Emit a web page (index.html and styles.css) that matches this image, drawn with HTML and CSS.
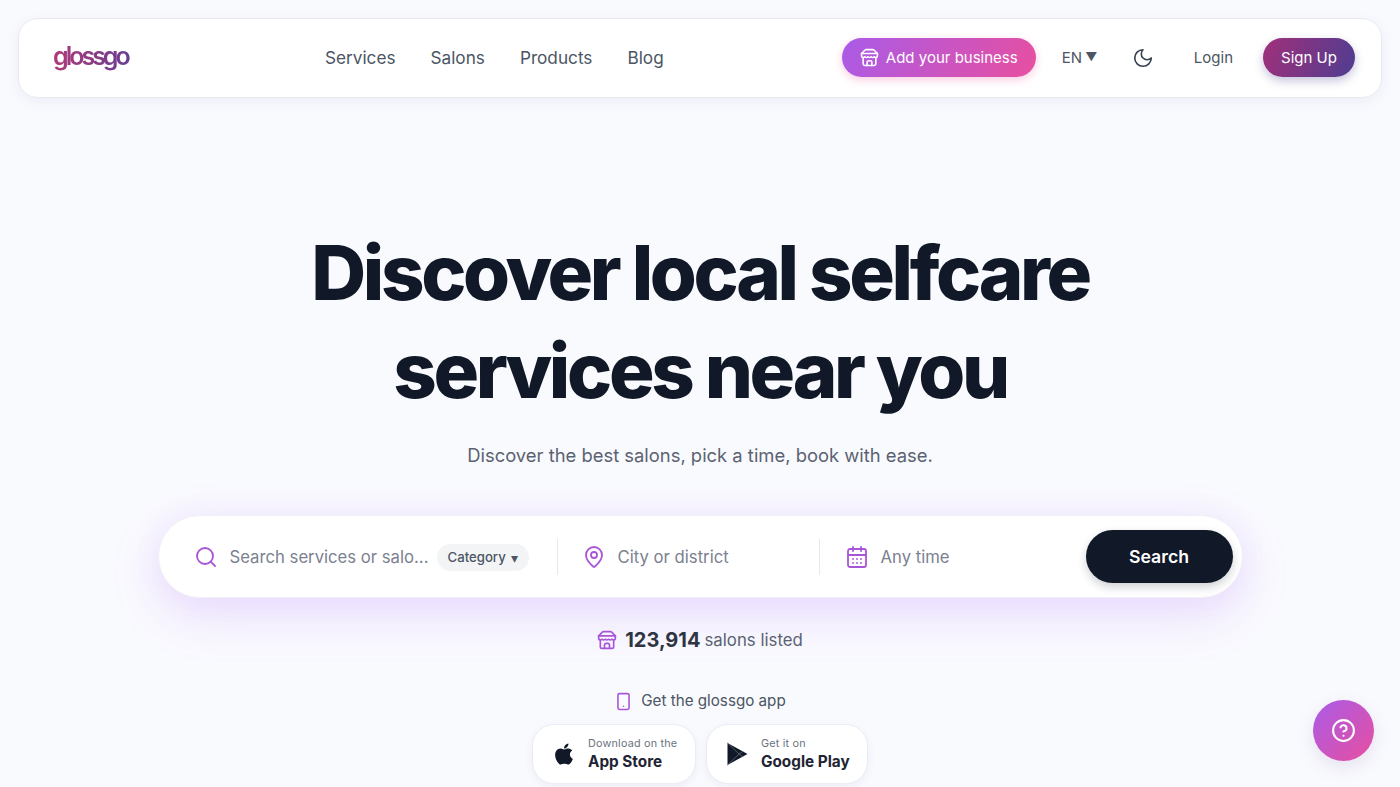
FILE: index.html
```html
<!DOCTYPE html>
<html lang="en">
<head>
<meta charset="utf-8">
<title>glossgo</title>
<link rel="stylesheet" href="styles.css">
</head>
<body>
<header class="nav">
  <a class="logo">glossgo</a>
  <nav class="links"><a>Services</a><a>Salons</a><a>Products</a><a>Blog</a></nav>
  <div class="actions">
    <button class="biz">
      <svg class="ic19" viewBox="0 0 24 24"><use href="#store"/></svg>Add your business
    </button>
    <span class="lang">EN<span class="caret">▼</span></span>
    <svg class="moon" viewBox="0 0 24 24"><path d="M12 3a6 6 0 0 0 9 9 9 9 0 1 1-9-9Z"/></svg>
    <a class="login">Login</a>
    <button class="signup">Sign Up</button>
  </div>
</header>

<main class="hero">
  <h1>Discover local selfcare<br>services near you</h1>
  <p class="sub">Discover the best salons, pick a time, book with ease.</p>

  <div class="search">
    <div class="field f1">
      <svg class="ic24" viewBox="0 0 24 24"><circle cx="11" cy="11" r="8"/><path d="m21 21-4.3-4.3"/></svg>
      <span class="ph">Search services or salo...</span>
      <span class="chip">Category <i>▾</i></span>
    </div>
    <div class="field f2">
      <svg class="ic24" viewBox="0 0 24 24"><path d="M20 10c0 4.993-5.539 10.193-7.399 11.799a1 1 0 0 1-1.202 0C9.539 20.193 4 14.993 4 10a8 8 0 0 1 16 0"/><circle cx="12" cy="10" r="3"/></svg>
      <span class="ph">City or district</span>
    </div>
    <div class="field f3">
      <svg class="ic24" viewBox="0 0 24 24"><path d="M8 2v4M16 2v4M3 10h18M8 14h.01M12 14h.01M16 14h.01M8 18h.01M12 18h.01M16 18h.01"/><rect x="3" y="4" width="18" height="18" rx="2"/></svg>
      <span class="ph">Any time</span>
    </div>
    <button class="go">Search</button>
  </div>

  <p class="count"><svg class="ic20" viewBox="0 0 24 24"><use href="#store"/></svg><b>123,914</b> salons listed</p>
  <p class="getapp"><svg class="ic19" viewBox="0 0 24 24"><rect x="5" y="2" width="14" height="20" rx="2"/><path d="M12 18h.01"/></svg>Get the glossgo app</p>

  <div class="stores">
    <a class="store s1">
      <svg class="brand apple" viewBox="0 0 24 24"><path d="M17.05 20.28c-.98.95-2.05.8-3.08.35-1.09-.46-2.09-.48-3.24 0-1.44.62-2.2.44-3.06-.35C2.79 15.25 3.51 7.59 9.05 7.31c1.35.07 2.29.74 3.08.8 1.18-.24 2.31-.93 3.57-.84 1.51.12 2.65.72 3.4 1.8-3.12 1.87-2.38 5.98.48 7.13-.57 1.5-1.31 2.99-2.54 4.09zM12.03 7.25c-.15-2.23 1.66-4.07 3.74-4.25.29 2.58-2.34 4.5-3.74 4.25z"/></svg>
      <span class="st"><small>Download on the</small><strong>App Store</strong></span>
    </a>
    <a class="store s2">
      <svg class="brand" viewBox="0 0 24 24"><path d="M2.5 1 22.5 12 2.5 23Z"/><path class="pl" d="M2.5 1 14 12 2.5 23M14 12l4-2.6M14 12l4 2.6"/></svg>
      <span class="st"><small>Get it on</small><strong>Google Play</strong></span>
    </a>
  </div>
</main>

<button class="help"><svg viewBox="0 0 24 24"><circle cx="12" cy="12" r="10"/><path d="M9.09 9a3 3 0 0 1 5.83 1c0 2-3 3-3 3M12 17h.01"/></svg></button>

<svg class="defs" aria-hidden="true"><defs><g id="store"><path d="m2 7 4.41-4.41A2 2 0 0 1 7.83 2h8.34a2 2 0 0 1 1.42.59L22 7"/><path d="M4 12v8a2 2 0 0 0 2 2h12a2 2 0 0 0 2-2v-8"/><path d="M15 22v-4a2 2 0 0 0-2-2h-2a2 2 0 0 0-2 2v4"/><path d="M2 7h20"/><path d="M22 7v3a2 2 0 0 1-2 2a2.7 2.7 0 0 1-1.59-.63.7.7 0 0 0-.82 0A2.7 2.7 0 0 1 16 12a2.7 2.7 0 0 1-1.59-.63.7.7 0 0 0-.82 0A2.7 2.7 0 0 1 12 12a2.7 2.7 0 0 1-1.59-.63.7.7 0 0 0-.82 0A2.7 2.7 0 0 1 8 12a2.7 2.7 0 0 1-1.59-.63.7.7 0 0 0-.82 0A2.7 2.7 0 0 1 4 12a2 2 0 0 1-2-2V7"/></g></defs></svg>
</body>
</html>
```
FILE: styles.css
```css
* { box-sizing: border-box; }
html, body { height: 100%; }
body {
  margin: 0;
  height: 787px;
  overflow: hidden;
  padding: 18px 18px 0;
  background: #f9fafe;
  font-family: Inter, "Liberation Sans", sans-serif;
  color: #111827;
}
svg { fill: none; stroke: currentColor; stroke-width: 2; stroke-linecap: round; stroke-linejoin: round; flex: none; }
button { font-family: inherit; border: 0; cursor: pointer; }
.defs { width: 0; height: 0; position: absolute; }
.ic19 { width: 19px; height: 19px; }
.ic20 { width: 20px; height: 20px; }
.ic24 { width: 24px; height: 24px; color: #a855d8; stroke-width: 1.8; }

.nav {
  height: 80px;
  display: flex;
  align-items: center;
  padding: 0 26px 1px 34px;
  background: #fff;
  border: 1px solid #e9ebf1;
  border-radius: 20px;
  box-shadow: 0 4px 14px rgba(90, 90, 150, .07);
}
.logo {
  width: 90px;
  padding-right: 10px;
  margin-top: -4px;
  font-family: Inter, sans-serif;
  font-size: 25px;
  font-weight: 600;
  letter-spacing: -3px;
  line-height: 34px;
  background: linear-gradient(90deg, #b03a78, #5b3f95);
  -webkit-background-clip: text;
  background-clip: text;
  color: transparent;
}
.links { display: flex; gap: 35px; margin-left: 182px; font-size: 17.2px; color: #4b5563; }
.actions { margin-left: auto; display: flex; align-items: center; color: #4b5563; }
.biz {
  width: 194px; height: 39px;
  display: flex; align-items: center; gap: 7px;
  padding: 0 0 0 18px;
  color: #fff;
  font-size: 15px;
  border-radius: 20px;
  background: linear-gradient(120deg, #a95be8, #e84f9f);
  box-shadow: 0 3px 9px rgba(236, 72, 153, .28);
}
.lang { display: flex; align-items: center; margin-left: 26px; font-size: 15px; width: 36px; white-space: nowrap; }
.caret { font-size: 12px; margin: -3px 0 0 3px; }
.moon { width: 22px; height: 22px; margin-left: 34px; color: #374151; stroke-width: 1.8; }
.login { margin-left: 40px; font-size: 15px; }
.signup {
  margin-left: 30px;
  width: 92px; height: 39px;
  color: #fff;
  font-size: 15px;
  border-radius: 20px;
  background: linear-gradient(110deg, #a0307a, #4f3d91);
  box-shadow: 0 4px 10px rgba(70, 60, 140, .3);
}

.hero { display: flex; flex-direction: column; align-items: center; }
h1 {
  margin: 125px 0 0;
  text-align: center;
  font-size: 76px;
  line-height: 98px;
  font-weight: 800;
  letter-spacing: -3.35px;
  color: #111827;
}
.sub { margin: 22px 0 0; font-size: 18.4px; line-height: 28px; color: #5b6272; }

.search {
  width: 1085px; height: 83px;
  margin-top: 46px;
  display: flex; align-items: center;
  background: #fff;
  border: 1px solid #f0f0f6;
  border-radius: 42px;
  box-shadow: 0 16px 50px rgba(168, 85, 247, .18), 0 0 30px rgba(168, 85, 247, .06);
}
.field { display: flex; align-items: center; height: 36px; margin-top: 1px; font-size: 16.7px; }
.field + .field { border-left: 1px solid #e7e8ec; }
.f1 { width: 398px; padding-left: 35px; }
.f2 { width: 262px; padding-left: 24px; }
.f3 { width: 267px; padding-left: 25px; }
.ph { margin-left: 12px; color: #7b8190; white-space: nowrap; }
.chip {
  margin-left: 9px;
  height: 27px; width: 92px;
  padding-left: 10px;
  display: flex; align-items: center; gap: 5px;
  font-size: 13.2px; font-weight: 500; color: #4b5563;
  background: #f3f4f6;
  border-radius: 14px;
  white-space: nowrap;
}
.chip i { font-style: normal; font-size: 14px; }
.go {
  width: 147px; height: 53px;
  color: #fff;
  font-size: 17.7px; font-weight: 600;
  background: #111827;
  border-radius: 27px;
  box-shadow: 0 4px 10px rgba(17, 24, 39, .2);
}

.count { display: flex; align-items: center; margin: 28px 0 0; font-size: 16.8px; line-height: 28px; color: #5b6272; }
.count .ic20 { color: #a855d8; margin-right: 8px; }
.count b { font-size: 20px; font-weight: 700; color: #2f3443; margin-right: 4px; }
.getapp { display: flex; align-items: center; gap: 8px; margin: 35px 0 0; font-size: 15.2px; line-height: 24px; color: #4b5563; }
.getapp .ic19 { color: #a855d8; }

.stores { display: flex; gap: 10px; margin-top: 11px; }
.store {
  height: 60px;
  display: flex; align-items: center; gap: 12px;
  padding-left: 19px;
  background: #fff;
  border: 1px solid #ebedf2;
  border-radius: 22px;
  box-shadow: 0 3px 8px rgba(90, 90, 150, .07);
}
.s1 { width: 164px; padding-left: 17px; gap: 10px; }
.s2 { width: 162px; padding-left: 18px; }
.brand { width: 24px; height: 24px; fill: #111827; stroke: none; }
.apple { width: 28px; height: 28px; }
.brand .pl { fill: none; stroke: #6b7280; stroke-width: .7; }
.st { display: flex; flex-direction: column; }
.st small { font-size: 10.8px; line-height: 13px; margin-bottom: 2px; letter-spacing: .2px; color: #6b7280; }
.st strong { font-size: 15.3px; line-height: 20px; font-weight: 700; color: #1f2433; }

.help {
  position: fixed; right: 26px; bottom: 26px;
  width: 61px; height: 61px;
  display: flex; align-items: center; justify-content: center;
  border-radius: 50%;
  background: linear-gradient(135deg, #a95be8, #e84f9f);
  color: #fff;
  box-shadow: 0 6px 18px rgba(120, 90, 160, .15);
}
.help svg { width: 25px; height: 25px; }
```
